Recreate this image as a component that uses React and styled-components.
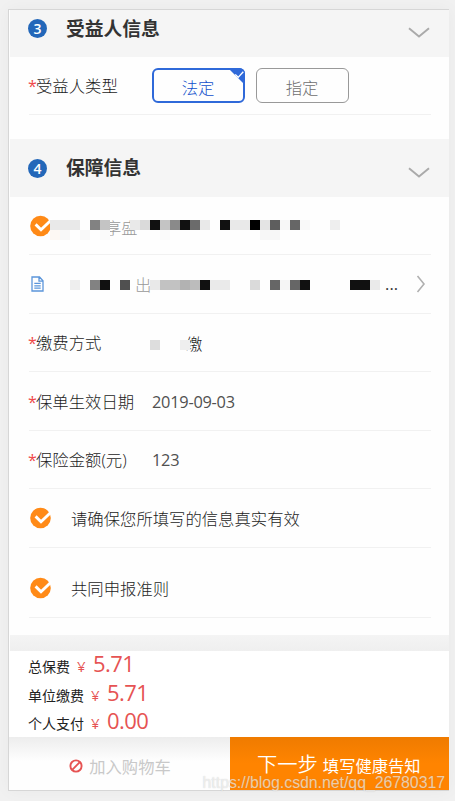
import styled, { createGlobalStyle } from 'styled-components';

const planCells = [
    '#e9e9e9', '#e9e9e9', '#e9e9e9', '', '#828282', '#c4c4c4', '', '', '#e9e9e9', '#dadada',
    '#111', '#c4c4c4', '#8a8a8a', '#111', '#6b6b6b', '#e9e9e9', '', '#111', '#e9e9e9', '#e9e9e9',
    '#000', '#e4e4e4', '#5e5e5e', '#f7f7f7', '#666', '#f9f9f9', '', '', '#eee',
];
const planShade = [
    '#fdf8f3', '#f8f8f8', '', '#f9f9f9', '', '#fafafa', '', '', '', '', '', '#fafafa', '', '', '',
    '', '', '', '', '', '', '#f7f7f7', '#f7f7f7',
];
const docCells = [
    '#eee', '', '#828282', '#111', '', '#505050', '', '', '#e9e9e9', '#c2c2c2', '#c2c2c2',
    '#b2b2b2', '#bcbcbc', '#111', '#eaeaea', '#eaeaea', '', '', '#dadada', '', '#666', '#f5f5f5',
    '#666', '#111', '', '', '', '', '#111', '#111', '#eaeaea',
];
const payCells = ['#ddd', '', '', '#eee'];

const totals = [
    { label: '总保费', value: '5.71', height: 29 },
    { label: '单位缴费', value: '5.71', height: 28 },
    { label: '个人支付', value: '0.00', height: 29 },
];

const Chevron = () => (
    <svg width="22" height="12" viewBox="0 0 22 12" fill="none" stroke="#aaa" strokeWidth="1.9">
        <path d="M1 1.2 11 9.6 21 1.2" />
    </svg>
);

const ArrowRight = () => (
    <svg width="10" height="18" viewBox="0 0 10 18" fill="none" stroke="#b0b0b0" strokeWidth="1.6">
        <path d="M1.5 1 8 9 1.5 17" />
    </svg>
);

const CheckCircle = () => (
    <svg width="23" height="22" viewBox="-1 0 23 22">
        <circle cx="10.5" cy="11" r="10.3" fill="#ff8a17" />
        <path d="M5.6 9.4 11 14.8 22 4.2" fill="none" stroke="#fff" strokeWidth="2.9" />
    </svg>
);

const DocIcon = () => (
    <svg width="13" height="16" viewBox="0 0 13 16" fill="none" stroke="#5b95da" strokeWidth="1.3">
        <path d="M1 1h7.5L12 4.8V15H1zM8 1v4.2h4M3.3 7.4h6.4M3.3 9.8h6.4M3.3 12.2h6.4" />
    </svg>
);

const BanIcon = () => (
    <svg width="14" height="14" viewBox="0 0 14 14" fill="none" stroke="#e65353" strokeWidth="1.9">
        <circle cx="7" cy="7" r="5.6" />
        <path d="M3.2 10.8 10.8 3.2" />
    </svg>
);

const Pixels = ({ cells, x, y }) => (
    <Mosaic $x={x} $y={y}>
        {cells.map((color, i) => <Cell key={i} $color={color} />)}
    </Mosaic>
);

const App = () => {
    return (
        <>
            <GlobalStyle />
            <Page>
                <Frame>
                    <SectionHead $height={47} $bottom={10}>
                        <Step>3</Step>
                        <Title>受益人信息</Title>
                        <Chevron />
                    </SectionHead>
                    <Row $height={58}>
                        <Label><Star>*</Star>受益人类型</Label>
                        <Options>
                            <Option $active>
                                法定
                                <Corner viewBox="0 0 16 16">
                                    <path d="M0 0h11a5 5 0 0 1 5 5v11z" fill="#2f69d9" />
                                    <path d="m6.8 6 2.8 2.8 4.8-5.2" fill="none" stroke="#fff" strokeWidth="1.3" />
                                </Corner>
                            </Option>
                            <Option>指定</Option>
                        </Options>
                    </Row>
                    <Gap $height={24} />
                    <SectionHead $height={58}>
                        <Step>4</Step>
                        <Title>保障信息</Title>
                        <Chevron />
                    </SectionHead>
                    <Row $height={58}>
                        <CheckCircle />
                        <Hidden $left={53} $lift={3}>享盛</Hidden>
                        <Pixels cells={planCells} x={22} y={23} />
                        <Pixels cells={planShade} x={22} y={33} />
                    </Row>
                    <Row $height={59}>
                        <IconSlot><DocIcon /></IconSlot>
                        <Hidden $left={88} $lift={0}>出</Hidden>
                        <Pixels cells={docCells} x={42} y={25} />
                        <Dots>...</Dots>
                        <ArrowRight />
                    </Row>
                    <Row $height={58}>
                        <Label><Star>*</Star>缴费方式</Label>
                        <PayValue>缴</PayValue>
                        <Pixels cells={payCells} x={122} y={26} />
                    </Row>
                    <Row $height={59} $top={2}>
                        <Label><Star>*</Star>保单生效日期</Label>
                        <Value>2019-09-03</Value>
                    </Row>
                    <Row $height={58} $top={1}>
                        <Label><Star>*</Star>保险金额(元)</Label>
                        <Value>123</Value>
                    </Row>
                    <Row $height={59}>
                        <CheckCircle />
                        <Agreement>请确保您所填写的信息真实有效</Agreement>
                    </Row>
                    <Row $height={70} $top={11}>
                        <CheckCircle />
                        <Agreement>共同申报准则</Agreement>
                    </Row>
                    <Gap $height={17} />
                    <Band />
                    <Totals>
                        {totals.map((item) => (
                            <TotalRow key={item.label} $height={item.height}>
                                <TotalLabel>{item.label}</TotalLabel>
                                <Yen>¥</Yen>
                                <Amount>{item.value}</Amount>
                            </TotalRow>
                        ))}
                    </Totals>
                    <Footer>
                        <CartButton><BanIcon />加入购物车</CartButton>
                        <NextButton><Big>下一步</Big>填写健康告知</NextButton>
                    </Footer>
                </Frame>
                <Watermark>https://blog.csdn.net/qq_26780317</Watermark>
            </Page>
        </>
    );
};

export default App;

const GlobalStyle = createGlobalStyle`
* {
    box-sizing: border-box;
}

body {
    margin: 0;
    background: #f1f1f1;
    font-family: "Open Sans", "Noto Sans CJK SC", sans-serif;
}

svg {
    flex-shrink: 0;
}
`;

const Page = styled.div`
    position: relative;
    width: 455px;
    height: 801px;
    padding: 9px 6px 10px 8px;
    background: #f1f1f1;
    overflow: hidden;
`;

const Frame = styled.div`
    display: flex;
    flex-direction: column;
    height: 782px;
    background: #fefefe;
    border: 1px solid #d6d6d6;
    border-right: none;
    box-shadow: 0 0 16px rgba(0, 0, 0, 0.04);
`;

const SectionHead = styled.div`
    display: flex;
    align-items: center;
    flex-shrink: 0;
    height: ${(p) => p.$height}px;
    padding: 0 19px ${(p) => p.$bottom || 0}px 18px;
    margin-left: 1px;
    background: #f5f5f5;

    svg {
        margin-left: auto;
        margin-top: 9px;
    }
`;

const Step = styled.span`
    display: flex;
    align-items: center;
    justify-content: center;
    width: 19px;
    height: 19px;
    margin-right: 19px;
    border-radius: 50%;
    background: #2367b9;
    color: #fff;
    font-size: 14px;
    font-weight: 600;
    line-height: 19px;
`;

const Title = styled.h2`
    margin: 0;
    color: #333;
    font-size: 18.8px;
    font-weight: 700;
    line-height: 28px;
`;

const Row = styled.div`
    position: relative;
    display: flex;
    align-items: center;
    flex-shrink: 0;
    height: ${(p) => p.$height}px;
    margin: 0 18px 0 20px;
    padding-top: ${(p) => p.$top || 0}px;
    border-bottom: 1px solid #f1f1f1;
    color: #1c1c1c;
    font-size: 16.35px;
    font-weight: 300;
`;

const Label = styled.span`
    width: 123px;
    white-space: nowrap;
    line-height: 24px;
`;

const Star = styled.span`
    display: inline-block;
    width: 8px;
    margin-left: -1px;
    color: #f04848;
    font-size: 16px;
    font-weight: 400;
`;

const Options = styled.div`
    display: flex;
    gap: 11px;
    margin-top: -1px;
`;

const Option = styled.div`
    position: relative;
    display: flex;
    align-items: center;
    justify-content: center;
    width: 93px;
    height: 35px;
    padding: 3px 1px 0 0;
    border: ${(p) => (p.$active ? '2px solid #2f69d9' : '1.5px solid #999')};
    border-radius: 6px;
    color: ${(p) => (p.$active ? '#1250cc' : '#6e6e6e')};
`;

const Corner = styled.svg`
    position: absolute;
    top: -2px;
    right: -2px;
    width: 17px;
    height: 17px;
`;

const Gap = styled.div`
    flex-shrink: 0;
    height: ${(p) => p.$height}px;
`;

const Hidden = styled.span`
    margin-left: ${(p) => p.$left}px;
    padding-top: ${(p) => p.$lift}px;
    color: #999;
`;

const Mosaic = styled.div`
    position: absolute;
    display: flex;
    left: ${(p) => p.$x - 1}px;
    top: ${(p) => p.$y}px;
`;

const Cell = styled.span`
    width: 10px;
    height: 10px;
    background: ${(p) => p.$color || 'transparent'};
`;

const IconSlot = styled.span`
    display: flex;
    width: 18px;
    padding-left: 2px;
`;

const Dots = styled.span`
    margin-left: auto;
    margin-right: 18px;
    color: #333;
    font-weight: 400;

    & + svg {
        margin-right: 5px;
    }
`;

const PayValue = styled.span`
    margin-left: 34px;
`;

const Value = styled.span`
    color: #505050;
    font-weight: 400;
    letter-spacing: -0.25px;
`;

const Agreement = styled.span`
    margin-left: 19px;
`;

const Band = styled.div`
    flex-shrink: 0;
    height: 16px;
    margin-left: 1px;
    background: linear-gradient(#f4f4f4, #efefef);
`;

const Totals = styled.div`
    flex-shrink: 0;
    height: 86px;
    padding-left: 19px;
    background: #fff;
`;

const TotalRow = styled.div`
    display: flex;
    align-items: baseline;
    height: ${(p) => p.$height}px;
    line-height: 25px;
`;

const TotalLabel = styled.span`
    color: #222;
    font-size: 14px;
`;

const Yen = styled.span`
    width: 16px;
    margin-left: 7px;
    color: #e65353;
    font-size: 15px;
`;

const Amount = styled.span`
    color: #e65353;
    font-size: 22px;
    letter-spacing: -0.6px;
`;

const Footer = styled.div`
    display: flex;
    flex: 1;
    min-height: 0;
`;

const CartButton = styled.div`
    display: flex;
    align-items: center;
    justify-content: center;
    gap: 6px;
    width: 221px;
    padding: 4px 0 0 1px;
    background: linear-gradient(#ededed, #fefefe 24px);
    color: #c9c9c9;
    font-size: 16.3px;
`;

const NextButton = styled.div`
    display: flex;
    align-items: baseline;
    flex: 1;
    padding: 12px 0 0 27px;
    background: linear-gradient(#ef7b00, #ff8400 26px);
    color: #fff;
    font-size: 16.3px;
    line-height: 30px;
    white-space: nowrap;
`;

const Big = styled.span`
    margin-right: 5px;
    font-size: 20.3px;
    font-weight: 350;
`;

const Watermark = styled.div`
    position: absolute;
    right: 10px;
    bottom: 8px;
    color: rgba(255, 255, 255, 0.62);
    font-family: "Liberation Sans", sans-serif;
    font-size: 15.8px;
    line-height: 20px;
    text-shadow: 0 0 1px rgba(120, 120, 120, 0.4);
`;
